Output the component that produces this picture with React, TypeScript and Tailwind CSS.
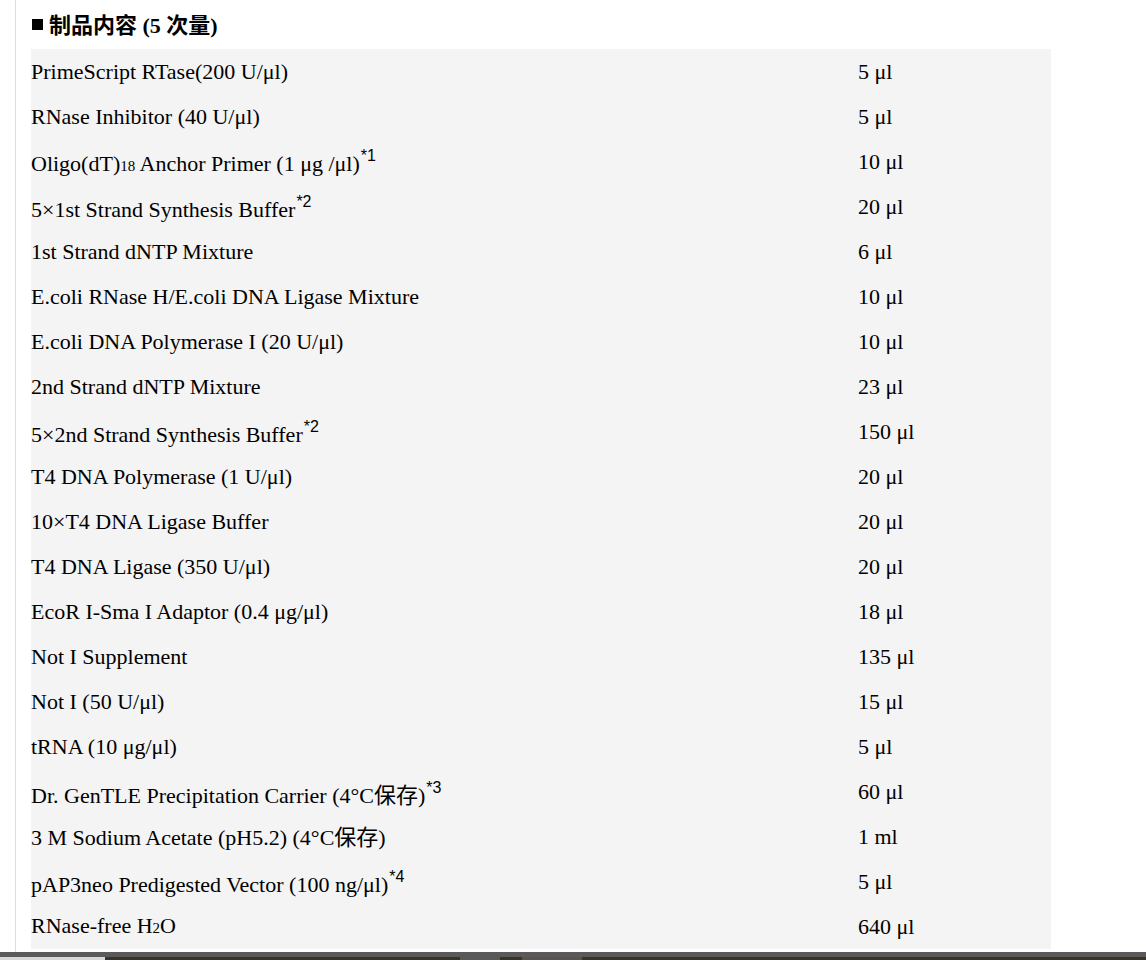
import React from 'react';

type Row = { name: React.ReactNode; amount: string; sup?: boolean };

// superscript footnote marks render in a sans face in the original page
const Sup = ({ children }: { children: React.ReactNode }) => (
  <sup className="text-[16px] -top-[10px] ml-[1px] font-['Liberation_Sans',sans-serif]">{children}</sup>
);

const Small = ({ children }: { children: React.ReactNode }) => (
  <span className="text-[15px]">{children}</span>
);

const Cjk = ({ children }: { children: React.ReactNode }) => (
  <span className="font-['Noto_Sans_CJK_SC',sans-serif]">{children}</span>
);

const rows: Row[] = [
  { name: 'PrimeScript RTase(200 U/μl)', amount: '5 μl' },
  { name: 'RNase Inhibitor (40 U/μl)', amount: '5 μl' },
  { name: <>Oligo(dT)<Small>18</Small> Anchor Primer (1 μg /μl)<Sup>*1</Sup></>, amount: '10 μl', sup: true },
  { name: <>5×1st Strand Synthesis Buffer<Sup>*2</Sup></>, amount: '20 μl', sup: true },
  { name: '1st Strand dNTP Mixture', amount: '6 μl' },
  { name: 'E.coli RNase H/E.coli DNA Ligase Mixture', amount: '10 μl' },
  { name: 'E.coli DNA Polymerase I (20 U/μl)', amount: '10 μl' },
  { name: '2nd Strand dNTP Mixture', amount: '23 μl' },
  { name: <>5×2nd Strand Synthesis Buffer<Sup>*2</Sup></>, amount: '150 μl', sup: true },
  { name: 'T4 DNA Polymerase (1 U/μl)', amount: '20 μl' },
  { name: '10×T4 DNA Ligase Buffer', amount: '20 μl' },
  { name: 'T4 DNA Ligase (350 U/μl)', amount: '20 μl' },
  { name: 'EcoR I-Sma I Adaptor (0.4 μg/μl)', amount: '18 μl' },
  { name: 'Not I Supplement', amount: '135 μl' },
  { name: 'Not I (50 U/μl)', amount: '15 μl' },
  { name: 'tRNA (10 μg/μl)', amount: '5 μl' },
  { name: <>Dr. GenTLE Precipitation Carrier (4°C<Cjk>保存</Cjk>)<Sup>*3</Sup></>, amount: '60 μl', sup: true },
  { name: <>3 M Sodium Acetate (pH5.2) (4°C<Cjk>保存</Cjk>)</>, amount: '1 ml' },
  { name: <>pAP3neo Predigested Vector (100 ng/μl)<Sup>*4</Sup></>, amount: '5 μl', sup: true },
  { name: <>RNase-free H<Small>2</Small>O</>, amount: '640 μl' },
];

export default function App() {
  return (
    <div className="w-[1146px] h-[960px] bg-white overflow-hidden flex flex-col font-['Liberation_Serif','Noto_Sans_CJK_SC',serif] text-black">
      <div className="flex-1 flex min-h-0">
        <div className="w-[15px] shrink-0" />
        <div className="w-px shrink-0 bg-[#dedede]" />
        <div className="flex-1 pl-[15px] min-w-0">
          {/* Heading */}
          <h3 className="h-[49px] pb-[1px] text-[22px] font-bold leading-[30px] flex items-center gap-[6px]">
            <span className="w-[11px] h-[11px] bg-black inline-block ml-[1px]" />
            <span>
              <Cjk>制品内容</Cjk> (5 <Cjk>次量</Cjk>)
            </span>
          </h3>

          {/* Contents table */}
          <div className="w-[1020px] bg-[#f4f4f4]">
            {rows.map((r, i) => (
              <div
                key={i}
                className={`h-[45px] flex items-center text-[22px] leading-[28px] ${r.sup ? 'pt-[6px]' : ''}`}
              >
                <div className="w-[827px] shrink-0 whitespace-nowrap">{r.name}</div>
                <div className={`flex-1 whitespace-nowrap ${r.sup ? '-mt-[6px]' : ''}`}>{r.amount}</div>
              </div>
            ))}
          </div>
        </div>
      </div>

      {/* bottom bar */}
      <div className="h-[8px] shrink-0 flex flex-col">
        <div className="h-[5px] bg-[#5a5a5a]" />
        <div className="h-[3px] flex">
          <div className="w-[105px] bg-[#d8d8d8]" />
          <div className="w-[355px] bg-[#3a3329]" />
          <div className="w-[40px] bg-[#5a5a5a]" />
          <div className="w-[22px] bg-[#3a3329]" />
          <div className="w-[60px] bg-[#5a5350]" />
          <div className="flex-1 bg-[#3a3329]" />
        </div>
      </div>
    </div>
  );
}
